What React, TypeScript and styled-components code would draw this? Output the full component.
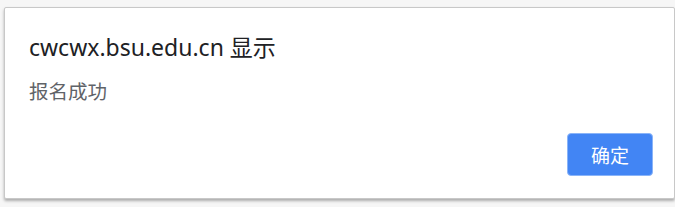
import styled, { createGlobalStyle } from "styled-components";

const GlobalStyle = createGlobalStyle`
  html, body {
    margin: 0;
    padding: 0;
    background: #f6f6f6;
  }
  body {
    font-family: "Noto Sans", "Noto Sans CJK SC", sans-serif;
  }
`;

const Page = styled.div`
  padding: 7px 0 0 4px;
  height: 207px;
  box-sizing: border-box;
`;

const Dialog = styled.div`
  width: 671px;
  height: 192px;
  box-sizing: border-box;
  background: #ffffff;
  border: 1px solid #c8c8c8;
  border-radius: 2px;
  box-shadow: 0 2px 3px rgba(0, 0, 0, 0.3);
  padding: 23px 21px 0 24px;
  display: flex;
  flex-direction: column;
`;

const Title = styled.div`
  font-size: 23px;
  line-height: 32px;
  color: #202124;
`;

const Message = styled.div`
  margin-top: 15px;
  font-size: 19.5px;
  line-height: 28px;
  color: #5f6368;
`;

const Actions = styled.div`
  margin-top: auto;
  margin-bottom: 22px;
  display: flex;
  justify-content: flex-end;
`;

const OkButton = styled.button`
  width: 86px;
  height: 43px;
  background: #4285f4;
  border: 1px solid #8ab4f8;
  border-radius: 4px;
  color: #ffffff;
  font-family: "Noto Sans", "Noto Sans CJK SC", sans-serif;
  font-size: 19px;
  cursor: pointer;
`;

export default function App() {
  return (
    <>
      <GlobalStyle />
      <Page>
        <Dialog>
          <Title>cwcwx.bsu.edu.cn 显示</Title>
          <Message>报名成功</Message>
          <Actions>
            <OkButton>确定</OkButton>
          </Actions>
        </Dialog>
      </Page>
    </>
  );
}
